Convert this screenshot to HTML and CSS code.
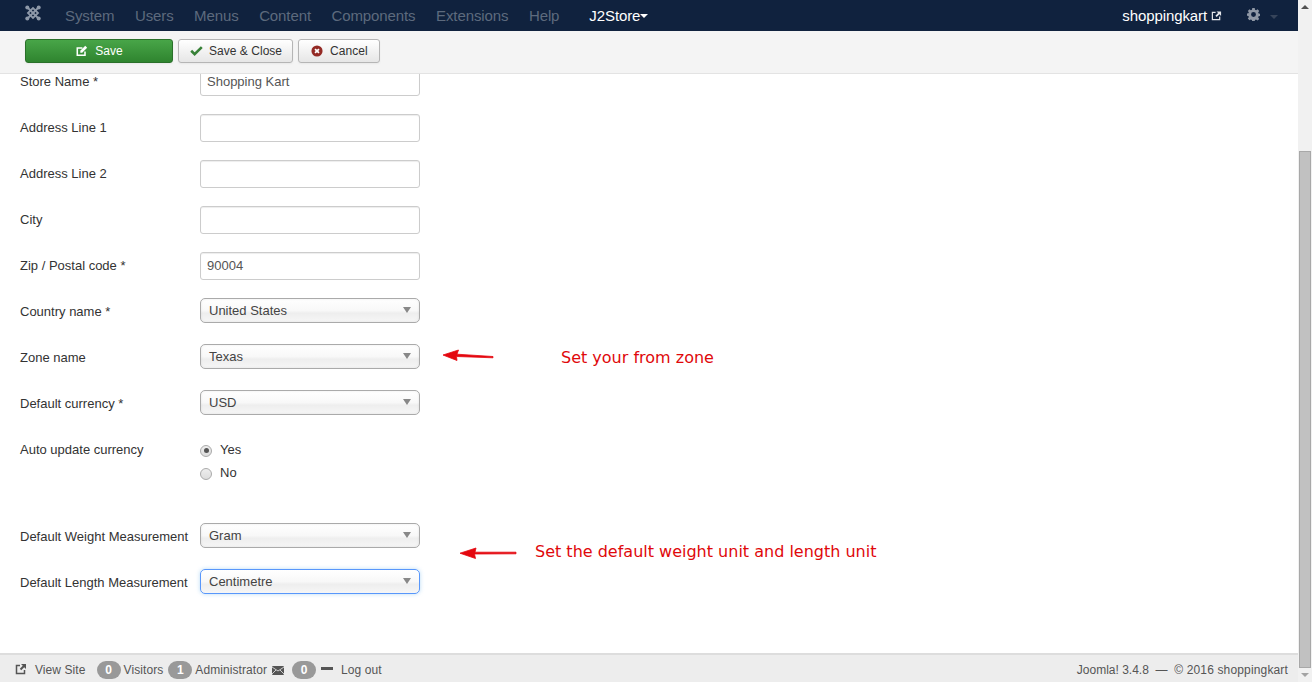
FILE: index.html
```html
<!DOCTYPE html>
<html lang="en">
<head>
<meta charset="utf-8">
<title>J2Store</title>
<link rel="stylesheet" href="styles.css">
</head>
<body>
<div class="app">
  <div class="main">
    <nav class="navbar">
      <svg class="logo" viewBox="0 0 16 16"><g fill="none" stroke="#8e99a9" stroke-width="1.800"><path d="M2.500 2.500 13.500 13.500M13.500 2.500 2.500 13.500"/><path d="M3 8 8 3 13 8 8 13Z"/></g><g fill="#8e99a9"><circle cx="2.300" cy="2.500" r="2"/><circle cx="13.700" cy="2.500" r="2"/><circle cx="2.300" cy="13.500" r="2"/><circle cx="13.700" cy="13.500" r="2"/></g></svg>
      <ul class="menu">
        <li>System</li><li>Users</li><li>Menus</li><li>Content</li><li>Components</li><li>Extensions</li><li>Help</li>
      </ul>
      <span class="menu-active">J2Store<i class="caret"></i></span>
      <span class="site">shoppingkart
        <svg class="ic-ext" viewBox="0 0 12 12"><path d="M9.500 7v3.500h-8v-8H5" fill="none" stroke="#e4e6ea" stroke-width="1.300"/><path d="M6 1.500h5v5L9.200 4.700 6.200 7.700 4.800 6.300 7.800 3.300Z" fill="#e4e6ea"/></svg>
      </span>
      <svg class="gear" viewBox="0 0 16 16"><path fill="#8f98a5" fill-rule="evenodd" d="M6.500 0h3l.4 2.200 1.300.6L13 1.500 15 3.600l-1.300 1.800.6 1.300 1.700.3v2.800l-1.700.4-.6 1.300 1.300 1.900-2 2-1.900-1.300-1.300.6-.4 2.300h-3l-.4-2.300-1.300-.6L3 15 1 13l1.300-1.900-.6-1.300L0 9.500V6.900l1.700-.3.6-1.300L1 3.600l2-2.100 1.800 1.300 1.300-.6ZM8 5a3 3 0 1 0 0 6 3 3 0 0 0 0-6Z"/></svg>
      <i class="caret caret-dim"></i>
    </nav>
    <div class="toolbar">
      <button class="btn btn-save"><svg class="btn-ic" viewBox="0 0 14 14"><path d="M10.500 7.500V12H1.500V3.500h6" fill="none" stroke="#fff" stroke-width="1.800"/><path d="M5 6.800 10.800 1 13 3.200 7.200 9H5Z" fill="#fff"/></svg>Save</button>
      <button class="btn"><svg class="btn-ic btn-ic-check" viewBox="0 0 14 14"><path d="M1.300 7.300 5 11 12.700 3.300" fill="none" stroke="#378137" stroke-width="2.800"/></svg>Save &amp; Close</button>
      <button class="btn btn-cancel"><svg class="btn-ic" viewBox="0 0 14 14"><circle cx="7" cy="7" r="6.500" fill="#942a25"/><path d="M4.700 4.700 9.300 9.300M9.300 4.700 4.700 9.300" stroke="#fff" stroke-width="2"/></svg>Cancel</button>
    </div>
    <div class="content">
      <form class="form">
        <div class="row"><label>Store Name *</label><div class="input">Shopping Kart</div></div>
        <div class="row"><label>Address Line 1</label><div class="input"></div></div>
        <div class="row"><label>Address Line 2</label><div class="input"></div></div>
        <div class="row"><label>City</label><div class="input"></div></div>
        <div class="row"><label>Zip / Postal code *</label><div class="input">90004</div></div>
        <div class="row"><label>Country name *</label><div class="select">United States<i class="arrow"></i></div></div>
        <div class="row"><label>Zone name</label><div class="select">Texas<i class="arrow"></i></div></div>
        <div class="row"><label>Default currency *</label><div class="select">USD<i class="arrow"></i></div></div>
        <div class="row row-radio"><label>Auto update currency</label>
          <div class="radios">
            <div class="radio"><i class="dot dot-on"></i>Yes</div>
            <div class="radio"><i class="dot"></i>No</div>
          </div>
        </div>
        <div class="row"><label>Default Weight Measurement</label><div class="select">Gram<i class="arrow"></i></div></div>
        <div class="row"><label>Default Length Measurement</label><div class="select select-focus">Centimetre<i class="arrow"></i></div></div>
      </form>
      <svg class="note-arrow arrow-zone" viewBox="0 0 52 14"><path d="M51 8.500 15 6.200 16.500 2 1 7 15 12.500 14.500 8.500 51 9.800Z" fill="#e4080f" stroke="#e4080f" stroke-width=".8"/></svg>
      <p class="note note-zone">Set your from zone</p>
      <svg class="note-arrow arrow-unit" viewBox="0 0 58 14"><path d="M57 6.200 16 6.200 17 2 1 7.200 16.500 12.500 15.500 8 57 7.800Z" fill="#e4080f" stroke="#e4080f" stroke-width=".8"/></svg>
      <p class="note note-unit">Set the default weight unit and length unit</p>
    </div>
    <footer class="footer">
      <svg class="f-ic" viewBox="0 0 12 12"><path d="M9.500 7v3.500h-8v-8H5" fill="none" stroke="#555" stroke-width="1.500"/><path d="M6 1h5v5L9.200 4.200 6.200 7.200 4.800 5.800 7.800 2.800Z" fill="#555"/></svg>
      <span class="f-view">View Site</span>
      <span class="badge">0</span><span class="f-t">Visitors</span>
      <span class="badge badge-2">1</span><span class="f-t">Administrator</span>
      <svg class="f-mail" viewBox="0 0 12 9"><rect width="12" height="9" rx="1" fill="#555"/><path d="M0 1 6 5 12 1M0 8 4 4M12 8 8 4" fill="none" stroke="#eee" stroke-width=".8"/></svg>
      <span class="badge badge-3">0</span>
      <i class="f-minus"></i>
      <span class="f-out">Log out</span>
      <span class="f-right">Joomla! 3.4.8 &nbsp;— &nbsp;<span class="f-copy">© 2016 shoppingkart</span></span>
    </footer>
  </div>
  <div class="scrollbar">
    <i class="sb-up"></i>
    <div class="sb-track"><div class="sb-thumb"></div></div>
    <i class="sb-down"></i>
  </div>
</div>
</body>
</html>
```

FILE: styles.css
```css
* { box-sizing: border-box; }
html, body { margin: 0; height: 100%; overflow: hidden; }
body { font-family: "Liberation Sans", Arial, sans-serif; font-size: 13px; line-height: 18px; color: #333; background: #fff; }
.app { display: flex; width: 1312px; height: 682px; }
.main { flex: 1; min-width: 0; display: flex; flex-direction: column; }

.navbar { height: 31px; flex: none; background: #10223e; display: flex; align-items: center; font-size: 15px; letter-spacing: -.1px; }
.logo { width: 16px; height: 16px; margin-left: 25px; margin-top: -5px; flex: none; }
.menu { list-style: none; margin: 0 0 0 24px; padding: 0; display: flex; gap: 20.500px; color: #5d6a7d; }
.menu-active { margin-left: 30px; color: #fff; display: flex; align-items: center; }
.caret { display: inline-block; width: 0; height: 0; border-left: 4px solid transparent; border-right: 4px solid transparent; border-top: 4px solid #fff; margin-left: 0; }
.site { margin-left: auto; color: #fff; display: flex; align-items: center; gap: 4px; }
.ic-ext { width: 11px; height: 11px; }
.gear { width: 13px; height: 13px; margin-left: 25px; margin-top: -3px; }
.caret-dim { border-top-color: #36445a; margin-left: 10px; margin-right: 20px; margin-top: 2px; }

.toolbar { height: 43px; flex: none; background: #f4f4f4; border-bottom: 1px solid #e3e3e3; display: flex; align-items: flex-start; padding: 8px 0 0 25px; gap: 5px; }
.btn { height: 24px; padding: 0 10px 0 11px; font: 12px "Liberation Sans", Arial, sans-serif; letter-spacing: .03px; color: #333; background: linear-gradient(#fff, #e6e6e6); border: 1px solid #b5b5b5; border-radius: 3px; display: flex; align-items: center; box-shadow: 0 1px 2px rgba(0,0,0,.05); }
.btn-ic { width: 12px; height: 12px; margin-right: 7px; flex: none; }
.btn-ic-check { width: 13px; height: 13px; margin-right: 6px; margin-top: -2px; }
.btn-save { width: 148px; justify-content: center; color: #fff; background: linear-gradient(#48a548, #2f842f); border-color: #2a702a; }
.btn-cancel { padding: 0 11px 0 12px; }

.content { flex: 1; min-height: 0; position: relative; overflow: hidden; }
.form { margin: -6px 0 0 20px; }
.row { display: flex; height: 28px; margin-bottom: 18px; }
.row label { width: 180px; flex: none; line-height: 27px; }
.input { width: 220px; height: 28px; border: 1px solid #ccc; border-radius: 3px; padding: 0 6px; line-height: 25px; color: #555; box-shadow: inset 0 1px 1px rgba(0,0,0,.075); }
.select { position: relative; width: 220px; height: 25px; border: 1px solid #aaa; border-radius: 5px; padding: 0 8px; line-height: 23px; color: #444; background: linear-gradient(#fff 0%, #f8f8f8 50%, #eeeeee 62%, #f6f6f6 100%); box-shadow: 0 0 3px rgba(0,0,0,.08) inset; }
.select-focus { border-color: #5897fb; box-shadow: 0 0 4px rgba(82,168,236,.4); }
.arrow { position: absolute; right: 8px; top: 8px; width: 0; height: 0; border-left: 4px solid transparent; border-right: 4px solid transparent; border-top: 6px solid #888; }
.row-radio { height: 64px; margin-bottom: 23px; }
.radios { padding-top: 2px; }
.radio { display: flex; height: 23px; align-items: center; color: #333; }
.dot { position: relative; width: 12px; height: 12px; border: 1px solid #aaa; border-radius: 50%; background: linear-gradient(#eee, #ddd); margin-right: 8px; margin-top: 2px; }
.dot-on::after { content: ""; position: absolute; left: 2.500px; top: 2.500px; width: 5px; height: 5px; border-radius: 50%; background: #555; }

.note { position: absolute; margin: 0; color: #e0080b; font: 16px/20px "DejaVu Sans", sans-serif; white-space: nowrap; }
.note-zone { left: 561px; top: 274px; }
.note-unit { left: 535px; top: 468px; }
.note-arrow { position: absolute; }
.arrow-zone { left: 442px; top: 274px; width: 52px; height: 14px; }
.arrow-unit { left: 459px; top: 472px; width: 58px; height: 14px; }

.footer { height: 29px; flex: none; background: #ededed; border-top: 2px solid #ddd; display: flex; align-items: center; padding: 3px 10px 0 15px; font-size: 12px; letter-spacing: .08px; color: #555; }
.f-ic { width: 12px; height: 12px; margin-top: -3px; }
.f-view { margin-left: 8px; margin-right: 1px; }
.badge { background: #999; color: #fff; border-radius: 9px; min-width: 24px; height: 18px; line-height: 18px; text-align: center; font-weight: bold; font-size: 12px; }
.footer .badge { margin-left: 10px; margin-right: 3px; }
.footer .badge-2 { margin-left: 5px; }
.f-mail { width: 12px; height: 9px; margin-left: 5px; }
.footer .badge-3 { margin-left: 8px; margin-right: 5px; }
.f-minus { width: 12px; height: 3px; background: #555; margin-top: -3px; }
.f-out { margin-left: 8px; }
.f-right { margin-left: auto; letter-spacing: 0; }
.f-copy { letter-spacing: .15px; }

.scrollbar { width: 14px; flex: none; background: #f1f1f1; display: flex; flex-direction: column; align-items: center; }
.sb-up, .sb-down { flex: none; width: 0; height: 0; border-left: 4px solid transparent; border-right: 4px solid transparent; }
.sb-up { border-bottom: 4px solid #505050; margin: 5px 0 5px; }
.sb-track { flex: 1; width: 100%; padding: 137px 1px 0; }
.sb-thumb { height: 517px; background: #c1c1c1; border: 1px solid #a8a8a8; }
.sb-down { border-top: 4px solid #a3a3a3; margin: 5px 0 5px; }
```
